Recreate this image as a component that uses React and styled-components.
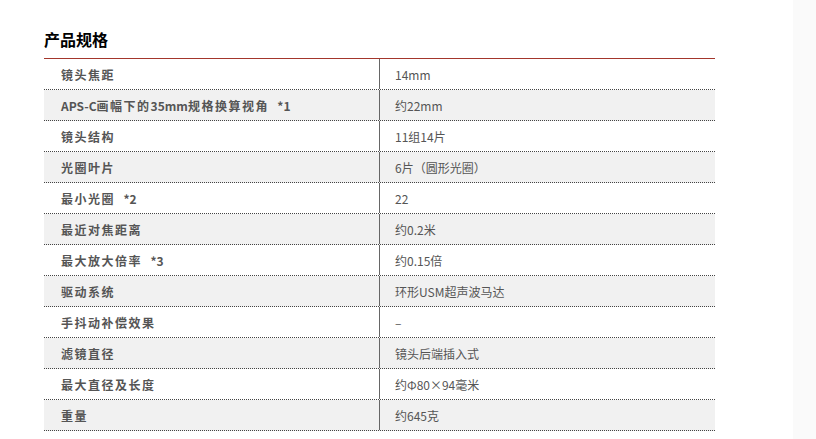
import React from 'react';
import styled, { createGlobalStyle } from 'styled-components';

const specs = [
    ['镜头焦距', '14mm'],
    ['APS-C画幅下的35mm规格换算视角  *1', '约22mm'],
    ['镜头结构', '11组14片'],
    ['光圈叶片', '6片（圆形光圈）'],
    ['最小光圈  *2', '22'],
    ['最近对焦距离', '约0.2米'],
    ['最大放大倍率  *3', '约0.15倍'],
    ['驱动系统', '环形USM超声波马达'],
    ['手抖动补偿效果', '–'],
    ['滤镜直径', '镜头后端插入式'],
    ['最大直径及长度', '约Φ80×94毫米'],
    ['重量', '约645克'],
];

// latin runs in the labels are set tighter than the hanzi
function splitLatin(text) {
    return text.split(/([A-Za-z0-9\-*]+)/).map((part, i) =>
        i % 2 === 1 ? <Latin key={i}>{part}</Latin> : part
    );
}

export default function App() {
    return (
        <Page>
            <GlobalStyle />
            <Main>
                <Title>产品规格</Title>
                <SpecTable>
                    {specs.map(([label, value], i) => (
                        <Row key={label} shaded={i % 2 === 1}>
                            <Label>{splitLatin(label)}</Label>
                            <Value>{value}</Value>
                        </Row>
                    ))}
                </SpecTable>
            </Main>
            <Side />
        </Page>
    )
}

const GlobalStyle = createGlobalStyle`
body {
    margin: 0;
    background: #fff;
    font-family: "Noto Sans CJK SC", "Liberation Sans", sans-serif;
}
`

const Page = styled.div`
display: flex;
height: 439px;
overflow: hidden;
`

const Main = styled.div`
width: 793px;
padding: 29px 0 0 44px;
box-sizing: border-box;
`

const Side = styled.div`
flex: 1;
background: #fafafa;
`

const Title = styled.h2`
margin: 0 0 8px;
font-size: 16px;
line-height: 21px;
font-weight: bold;
color: #000;
`

const SpecTable = styled.div`
width: 671px;
border-top: 1px solid #a3362c;
`

const Row = styled.div`
display: grid;
grid-template-columns: 336px 1fr;
height: 31px;
box-sizing: border-box;
border-bottom: 1px dotted #444;
background: ${props => props.shaded ? '#f1f1f1' : '#fff'};
`

const Label = styled.div`
display: flex;
align-items: center;
padding-left: 17px;
font-size: 12px;
font-weight: bold;
letter-spacing: 1.5px;
white-space: pre;
color: #555;
border-right: 1px solid #666;
`

const Latin = styled.span`
letter-spacing: 0;
`

const Value = styled.div`
display: flex;
align-items: center;
padding-left: 15px;
font-size: 12px;
color: #555;
`
